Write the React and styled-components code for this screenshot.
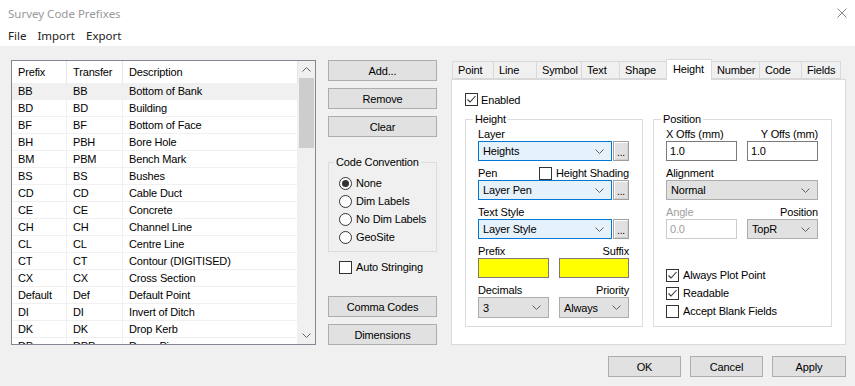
import React from 'react';
import styled, { createGlobalStyle } from 'styled-components';

const GlobalStyle = createGlobalStyle`
  html, body {
    margin: 0;
    padding: 0;
  }
  body {
    font-family: "Liberation Sans", Arial, sans-serif;
    font-size: 11px;
    color: #000;
    background: #f0f0f0;
  }
  * {
    box-sizing: border-box;
  }
`;

const Window = styled.div`
  width: 855px;
  height: 386px;
  display: flex;
  flex-direction: column;
  background: #f0f0f0;
  overflow: hidden;
  letter-spacing: -0.15px;
`;

const TitleBar = styled.div`
  height: 26px;
  background: #fff;
  display: flex;
  align-items: center;
  justify-content: space-between;
  padding: 0 8px 0 8px;
  font-family: "Noto Sans", sans-serif;
  font-size: 11.5px;
  letter-spacing: 0;
  color: #999;
`;

const CloseButton = styled.div`
  width: 10px;
  height: 10px;
  display: flex;
`;

const MenuBar = styled.div`
  height: 20px;
  background: #fff;
  display: flex;
  align-items: center;
  gap: 11px;
  padding: 0 8px 2px;
  font-family: "Noto Sans", sans-serif;
  font-size: 11.5px;
  letter-spacing: 0;
  color: #222;
`;

const Main = styled.div`
  display: flex;
  padding: 14px 9px 0 11px;
  height: 299px;
`;

/* ---------- list ---------- */

const ListBox = styled.div`
  width: 305px;
  height: 285px;
  border: 1px solid #828790;
  background: #fff;
  display: flex;
  overflow: hidden;
`;

const ListBody = styled.div`
  flex: 1;
  overflow: hidden;
`;

const GridRow = styled.div`
  display: grid;
  grid-template-columns: 55px 56px 1fr;
  height: ${(p) => (p.$header ? '22px' : '17px')};
  background: ${(p) => (p.$selected ? '#f0f0f0' : '#fff')};
  border-bottom: ${(p) => (p.$header ? 'none' : '1px solid #f0f0f0')};
`;

const Cell = styled.div`
  display: flex;
  align-items: center;
  padding-left: 6px;
  border-right: 1px solid ${(p) => (p.$header ? '#e5e5e5' : '#f0f0f0')};
  white-space: nowrap;
  overflow: hidden;
`;

const ScrollBar = styled.div`
  width: 17px;
  background: #f0f0f0;
  display: flex;
  flex-direction: column;
  align-items: center;
`;

const ScrollArrow = styled.div`
  height: 17px;
  width: 17px;
  display: flex;
  align-items: center;
  justify-content: center;
`;

const ScrollThumb = styled.div`
  width: 15px;
  height: 70px;
  background: #cdcdcd;
`;

const ScrollTrack = styled.div`
  flex: 1;
`;

/* ---------- side buttons ---------- */

const SideColumn = styled.div`
  width: 109px;
  margin-left: 12px;
  height: 285px;
  display: flex;
  flex-direction: column;
  gap: 7px;
`;

const PushButton = styled.button`
  width: ${(p) => p.$w || '100%'};
  height: 21px;
  margin: 0;
  padding: 0;
  background: #e1e1e1;
  border: 1px solid #adadad;
  font-family: inherit;
  font-size: 11px;
  letter-spacing: -0.15px;
  color: #000;
`;

const PushedDown = styled(PushButton)`
  margin-top: auto;
`;

const GroupBox = styled.fieldset`
  margin: 0;
  min-width: 0;
  border: 1px solid #dcdcdc;
  padding: 0 13px 0 12px;
  display: flex;
  flex-direction: column;
`;

const ConventionBox = styled(GroupBox)`
  margin-top: 11px;
  padding: 5px 6px 5px 10px;
`;

const Legend = styled.legend`
  padding: 0 2px;
  margin-left: -5px;
  line-height: 14px;
`;

const OptionRow = styled.label`
  height: 18px;
  display: flex;
  align-items: center;
  gap: 4px;
  white-space: nowrap;
`;

const AutoRow = styled(OptionRow)`
  margin-top: -1px;
  margin-left: 11px;
`;

const Radio = styled.span`
  width: 13px;
  height: 13px;
  border-radius: 50%;
  border: 1px solid #333;
  background: #fff;
  display: flex;
  align-items: center;
  justify-content: center;
  flex-shrink: 0;

  &::after {
    content: '';
    width: 7px;
    height: 7px;
    border-radius: 50%;
    background: ${(p) => (p.$on ? '#333' : 'transparent')};
  }
`;

const Box = styled.span`
  width: 13px;
  height: 13px;
  border: 1px solid #333;
  background: #fff;
  display: flex;
  align-items: center;
  justify-content: center;
  flex-shrink: 0;
`;

/* ---------- tabs ---------- */

const TabArea = styled.div`
  width: 395px;
  margin-left: 14px;
  margin-top: -2px;
  display: flex;
  flex-direction: column;
  height: 287px;
`;

const TabRow = styled.div`
  display: flex;
  align-items: flex-end;
  padding-left: 1px;
  height: 21px;
  position: relative;
  z-index: 1;
`;

const Tab = styled.div`
  width: ${(p) => p.$w}px;
  height: ${(p) => (p.$active ? '21px' : '18px')};
  margin-left: -1px;
  margin-bottom: ${(p) => (p.$active ? '-1px' : '0')};
  border: 1px solid #d9d9d9;
  border-bottom: ${(p) => (p.$active ? 'none' : '1px solid #d9d9d9')};
  background: ${(p) => (p.$active ? '#fff' : '#f0f0f0')};
  padding-left: ${(p) => (p.$active ? '6px' : '5px')};
  display: flex;
  align-items: center;
  padding-bottom: ${(p) => (p.$active ? '2px' : '0')};
  z-index: ${(p) => (p.$active ? 2 : 0)};
  white-space: nowrap;

  &:first-child {
    margin-left: 0;
  }
`;

const TabPanel = styled.div`
  flex: 1;
  border: 1px solid #d9d9d9;
  background: #fff;
  padding: 13px 13px 17px 13px;
  display: flex;
  flex-direction: column;
`;

const EnabledRow = styled.label`
  display: flex;
  align-items: center;
  gap: 3px;
  height: 13px;
`;

const GroupsRow = styled.div`
  flex: 1;
  margin-top: 6px;
  display: grid;
  grid-template-columns: 178px 179px;
  gap: 10px;
`;

const FieldLabel = styled.div`
  height: 14px;
  line-height: 14px;
  margin-top: 5px;
  display: flex;
  justify-content: space-between;
  align-items: center;
  color: ${(p) => (p.$disabled ? '#a0a0a0' : '#000')};

  legend + & {
    margin-top: 1px;
  }
`;

const Dim = styled.span`
  color: #a0a0a0;
`;

const ShadingCheck = styled.label`
  display: flex;
  align-items: center;
  gap: 4px;
`;

const ControlRow = styled.div`
  display: flex;
  justify-content: space-between;
`;

const Combo = styled.div`
  flex: ${(p) => (p.$w ? 'none' : 1)};
  width: ${(p) => (p.$w ? `${p.$w}px` : 'auto')};
  height: ${(p) => p.$h || 20}px;
  border: 1px solid ${(p) => (p.$blue ? '#0078d7' : '#adadad')};
  background: ${(p) => (p.$blue ? '#e5f1fb' : '#e1e1e1')};
  display: flex;
  align-items: center;
  justify-content: space-between;
  padding: 0 7px 0 4px;
`;

const Ellipsis = styled.div`
  width: 16px;
  height: 20px;
  margin-left: 1px;
  border: 1px solid #a0a0a0;
  background: #e1e1e1;
  box-shadow: inset 1px 1px #fff, inset -1px -1px #d0d0d0;
  display: flex;
  align-items: flex-end;
  justify-content: center;
  padding-bottom: 3px;
  line-height: 8px;
  font-size: 10px;
`;

const TextBox = styled.div`
  width: ${(p) => p.$w}px;
  height: ${(p) => p.$h || 20}px;
  border: 1px solid ${(p) => (p.$disabled ? '#cccccc' : '#7a7a7a')};
  background: ${(p) => p.$bg || '#fff'};
  color: ${(p) => (p.$disabled ? '#a0a0a0' : '#000')};
  display: flex;
  align-items: center;
  padding-left: 3px;
`;

const ChecksStack = styled.div`
  margin-top: auto;
  padding-bottom: 6px;
  display: flex;
  flex-direction: column;
`;

const Footer = styled.div`
  display: flex;
  justify-content: flex-end;
  gap: 9px;
  padding: 11px 9px 0 0;
`;

/* ---------- small drawings ---------- */

const Chevron = ({ up }) => (
  <svg width="9" height="5" viewBox="0 0 9 5">
    <polyline
      points={up ? '0.5,4.5 4.5,0.5 8.5,4.5' : '0.5,0.5 4.5,4.5 8.5,0.5'}
      fill="none"
      stroke="#606060"
      strokeWidth="1"
    />
  </svg>
);

const Tick = () => (
  <svg width="11" height="11" viewBox="0 0 11 11">
    <polyline points="1.5,5.5 4,8 9.5,2" fill="none" stroke="#333" strokeWidth="1.1" />
  </svg>
);

const Check = ({ on }) => <Box>{on && <Tick />}</Box>;

const rows = [
  ['BB', 'BB', 'Bottom of Bank'],
  ['BD', 'BD', 'Building'],
  ['BF', 'BF', 'Bottom of Face'],
  ['BH', 'PBH', 'Bore Hole'],
  ['BM', 'PBM', 'Bench Mark'],
  ['BS', 'BS', 'Bushes'],
  ['CD', 'CD', 'Cable Duct'],
  ['CE', 'CE', 'Concrete'],
  ['CH', 'CH', 'Channel Line'],
  ['CL', 'CL', 'Centre Line'],
  ['CT', 'CT', 'Contour (DIGITISED)'],
  ['CX', 'CX', 'Cross Section'],
  ['Default', 'Def', 'Default Point'],
  ['DI', 'DI', 'Invert of Ditch'],
  ['DK', 'DK', 'Drop Kerb'],
  ['DP', 'DPP', 'Down Pipe'],
];

const tabs = [
  ['Point', 42],
  ['Line', 44],
  ['Symbol', 46],
  ['Text', 39],
  ['Shape', 48],
  ['Height', 46],
  ['Number', 49],
  ['Code', 43],
  ['Fields', 40],
];

export default function App() {
  return (
    <Window>
      <GlobalStyle />
      <TitleBar>
        <span>Survey Code Prefixes</span>
        <CloseButton>
          <svg width="10" height="10" viewBox="0 0 10 10">
            <path d="M0.5 0.5 L9.5 9.5 M9.5 0.5 L0.5 9.5" stroke="#888" strokeWidth="1" />
          </svg>
        </CloseButton>
      </TitleBar>
      <MenuBar>
        <span>File</span>
        <span>Import</span>
        <span>Export</span>
      </MenuBar>

      <Main>
        <ListBox>
          <ListBody>
            <GridRow $header>
              <Cell $header>Prefix</Cell>
              <Cell $header>Transfer</Cell>
              <Cell $header>Description</Cell>
            </GridRow>
            {rows.map((r, i) => (
              <GridRow key={r[0]} $selected={i === 0}>
                <Cell>{r[0]}</Cell>
                <Cell>{r[1]}</Cell>
                <Cell>{r[2]}</Cell>
              </GridRow>
            ))}
          </ListBody>
          <ScrollBar>
            <ScrollArrow>
              <Chevron up />
            </ScrollArrow>
            <ScrollThumb />
            <ScrollTrack />
            <ScrollArrow>
              <Chevron />
            </ScrollArrow>
          </ScrollBar>
        </ListBox>

        <SideColumn>
          <PushButton>Add...</PushButton>
          <PushButton>Remove</PushButton>
          <PushButton>Clear</PushButton>
          <ConventionBox>
            <Legend>Code Convention</Legend>
            <OptionRow>
              <Radio $on /> None
            </OptionRow>
            <OptionRow>
              <Radio /> Dim Labels
            </OptionRow>
            <OptionRow>
              <Radio /> No Dim Labels
            </OptionRow>
            <OptionRow>
              <Radio /> GeoSite
            </OptionRow>
          </ConventionBox>
          <AutoRow>
            <Check /> Auto Stringing
          </AutoRow>
          <PushedDown>Comma Codes</PushedDown>
          <PushButton>Dimensions</PushButton>
        </SideColumn>

        <TabArea>
          <TabRow>
            {tabs.map(([label, w]) => (
              <Tab key={label} $w={w} $active={label === 'Height'}>
                {label}
              </Tab>
            ))}
          </TabRow>
          <TabPanel>
            <EnabledRow>
              <Check on /> Enabled
            </EnabledRow>
            <GroupsRow>
              <GroupBox>
                <Legend>Height</Legend>
                <FieldLabel>Layer</FieldLabel>
                <ControlRow>
                  <Combo $blue>
                    Heights <Chevron />
                  </Combo>
                  <Ellipsis>...</Ellipsis>
                </ControlRow>
                <FieldLabel>
                  <span>Pen</span>
                  <ShadingCheck>
                    <Check /> Height Shading
                  </ShadingCheck>
                </FieldLabel>
                <ControlRow>
                  <Combo $blue>
                    Layer Pen <Chevron />
                  </Combo>
                  <Ellipsis>...</Ellipsis>
                </ControlRow>
                <FieldLabel>Text Style</FieldLabel>
                <ControlRow>
                  <Combo $blue>
                    Layer Style <Chevron />
                  </Combo>
                  <Ellipsis>...</Ellipsis>
                </ControlRow>
                <FieldLabel>
                  <span>Prefix</span>
                  <span>Suffix</span>
                </FieldLabel>
                <ControlRow>
                  <TextBox $w={71} $bg="#ffff00" />
                  <TextBox $w={70} $bg="#ffff00" />
                </ControlRow>
                <FieldLabel>
                  <span>Decimals</span>
                  <span>Priority</span>
                </FieldLabel>
                <ControlRow>
                  <Combo $w={71} $h={21}>
                    3 <Chevron />
                  </Combo>
                  <Combo $w={70} $h={21}>
                    Always <Chevron />
                  </Combo>
                </ControlRow>
              </GroupBox>

              <GroupBox>
                <Legend>Position</Legend>
                <FieldLabel>
                  <span>X Offs (mm)</span>
                  <span>Y Offs (mm)</span>
                </FieldLabel>
                <ControlRow>
                  <TextBox $w={71}>1.0</TextBox>
                  <TextBox $w={71}>1.0</TextBox>
                </ControlRow>
                <FieldLabel>Alignment</FieldLabel>
                <ControlRow>
                  <Combo>
                    Normal <Chevron />
                  </Combo>
                </ControlRow>
                <FieldLabel>
                  <Dim>Angle</Dim>
                  <span>Position</span>
                </FieldLabel>
                <ControlRow>
                  <TextBox $w={71} $disabled>
                    0.0
                  </TextBox>
                  <Combo $w={71}>
                    TopR <Chevron />
                  </Combo>
                </ControlRow>
                <ChecksStack>
                  <OptionRow>
                    <Check on /> Always Plot Point
                  </OptionRow>
                  <OptionRow>
                    <Check on /> Readable
                  </OptionRow>
                  <OptionRow>
                    <Check /> Accept Blank Fields
                  </OptionRow>
                </ChecksStack>
              </GroupBox>
            </GroupsRow>
          </TabPanel>
        </TabArea>
      </Main>

      <Footer>
        <PushButton $w="73px">OK</PushButton>
        <PushButton $w="73px">Cancel</PushButton>
        <PushButton $w="74px">Apply</PushButton>
      </Footer>
    </Window>
  );
}
